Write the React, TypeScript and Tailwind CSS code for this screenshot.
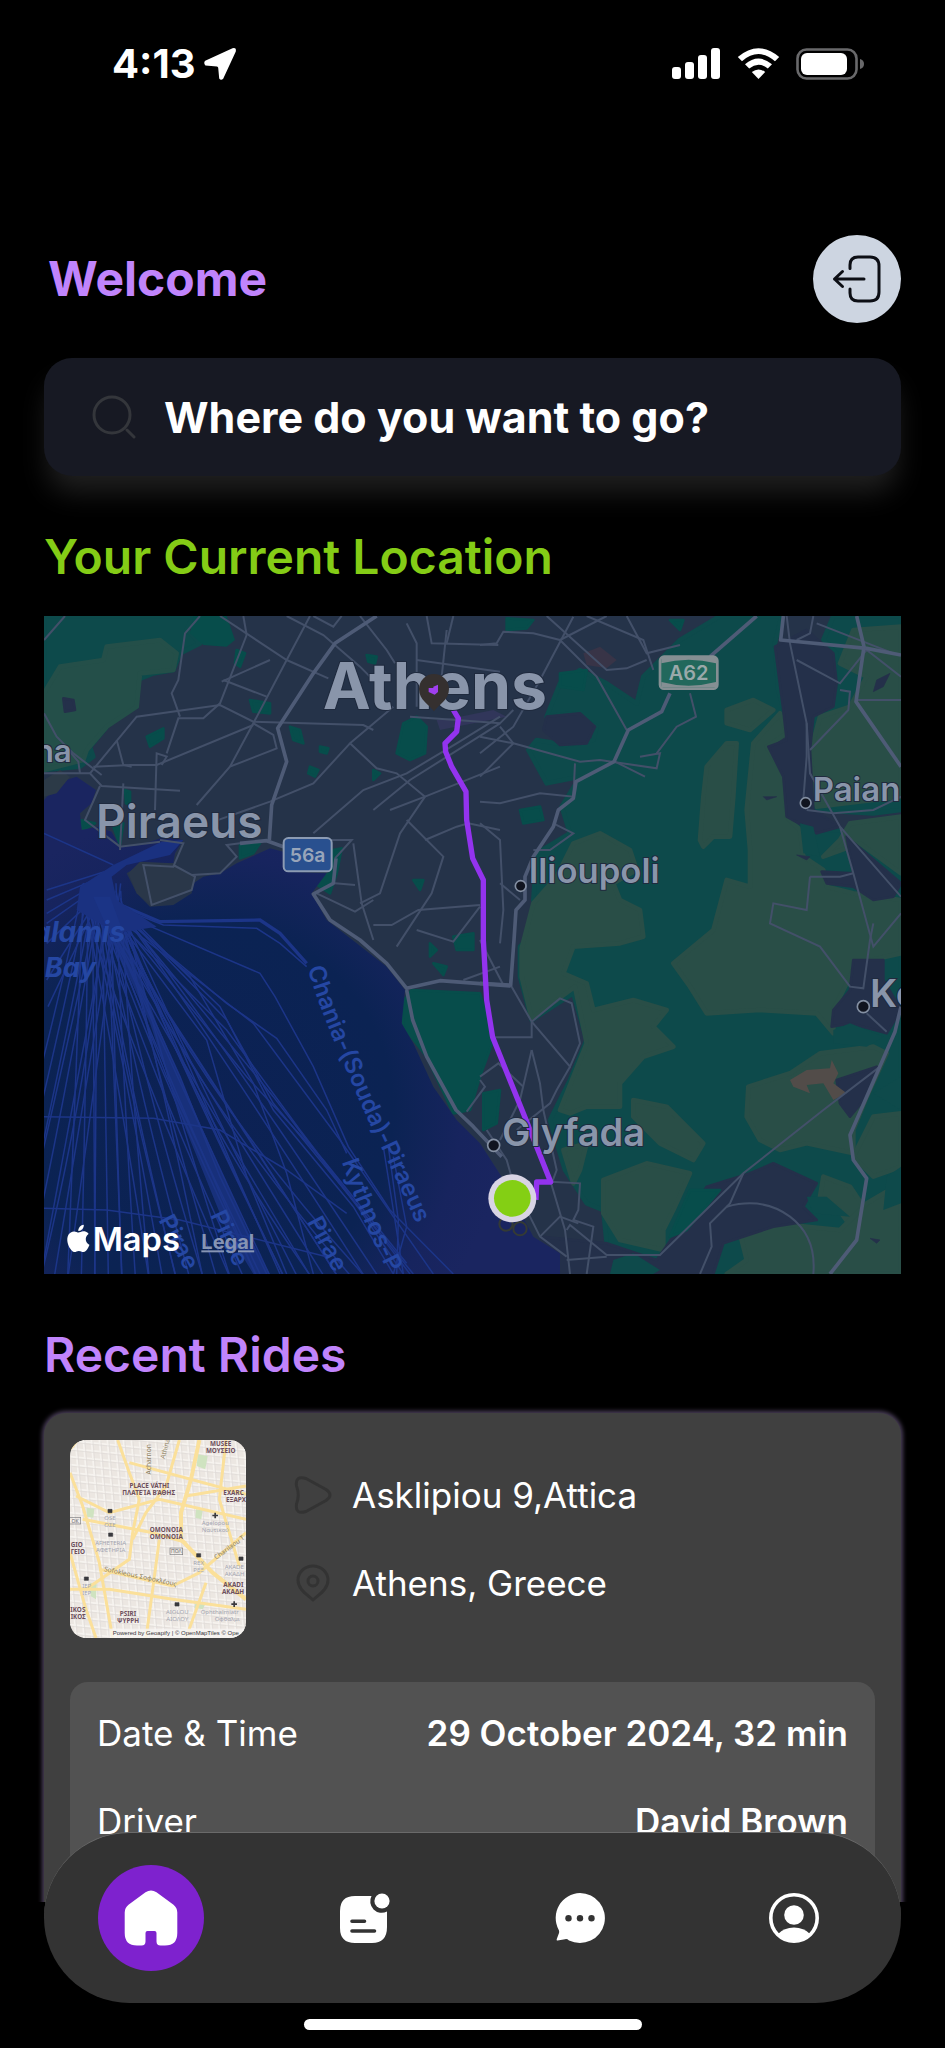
import React from "react";

const ROADS_MAJOR = [
  "M1010 18 L885 100 L820 190 L713 355 L740 455 L695 585 L688 690",
  "M2150 18 L2010 140",
  "M1890 250 L1865 305 L1765 360 L1722 455 L1608 515 L1600 565 L1555 600 L1540 650 L1480 740 L1455 800 L1455 870 L1428 900 L1422 990 L1412 1125 L1320 1120",
  "M600 700 L680 692 L730 710",
  "M888 745 L880 820 L820 852 L870 930 L960 990 L1040 1060 L1100 1135 L1200 1112 L1412 1128",
  "M1100 1140 L1118 1230 L1160 1340 L1248 1500 L1300 1550 L1385 1640",
  "M2230 18 L2222 90 L2480 115 L2583 135",
  "M2450 18 L2472 110 L2448 275 L2583 470",
  "M2583 1190 L2565 1265 L2430 1575 L2440 1650 L2480 1705 L2450 1890 L2370 1992",
];

const ROADS_MINOR = [
  "M12 490 L150 490 L185 528 L420 542",
  "M12 90 L75 18",
  "M12 310 L50 380 L100 430 L185 495",
  "M120 490 L115 455 L85 420",
  "M480 18 L435 70 L415 210 L395 250 L420 320",
  "M150 490 L290 320 L540 285 L640 335 L970 345 L1000 360",
  "M640 340 L700 375 L710 415 L570 470 L470 585",
  "M160 470 L270 465 L350 465 L640 345",
  "M230 390 L250 465 L275 470",
  "M345 600 L350 430 L380 440 L365 465",
  "M620 75 L540 280 L490 325 L415 325 L380 430",
  "M545 215 L690 150 M550 210 L680 260",
  "M540 18 L740 150 L865 205",
  "M610 18 L620 75",
  "M810 18 L740 150 L640 340 L570 470",
  "M740 18 L850 75 L960 170 L1010 220",
  "M820 18 L880 50 L905 18",
  "M960 18 L1040 120 L1065 160",
  "M1100 40 L1130 100 L1130 290",
  "M1160 18 L1175 100 L1375 105",
  "M1220 60 L1205 200",
  "M1240 18 L1220 100",
  "M1130 150 L1380 185",
  "M1110 320 L1250 330 L1380 340 L1420 300",
  "M1060 290 L930 400 L1010 475 L1070 490 L1155 560",
  "M930 400 L820 520 L690 575 L520 635",
  "M820 670 L970 540 L1100 490 L1250 400 L1380 320",
  "M1050 600 L1155 560 L1380 470",
  "M1380 340 L1110 510 L1000 600",
  "M1100 630 L1210 740 L1175 850 L1070 1010",
  "M960 880 L1020 850 L1080 670 L1155 560",
  "M940 700 L965 880 L1000 990",
  "M730 690 L935 690 L885 745",
  "M885 820 L945 825",
  "M830 850 L945 905 L1000 870",
  "M1000 945 L1055 945 L1135 900 L1320 885",
  "M1130 960 L1240 995 L1320 890",
  "M1155 690 L1250 650 L1285 640 L1380 660",
  "M1270 1110 L1380 1070",
  "M240 720 L250 520",
  "M180 528 L135 630 L240 710 L360 695",
  "M360 690 L430 700 L400 770 L310 765 L335 885 L455 840 L465 800 L400 765",
  "M455 795 L540 790 L590 740 L560 705 L600 700",
  "M1600 20 L1500 210 L1420 350 L1320 430",
  "M1560 90 L1670 200 L1760 360",
  "M1320 105 L1370 100 L1390 65 L1480 70 L1560 90",
  "M1560 90 L1700 18",
  "M1520 18 L1700 180 L1760 175 L1820 150",
  "M1640 18 L1810 90 L1840 180",
  "M1760 18 L1820 130 L1920 105",
  "M1320 380 L1420 400 L1620 455 L1680 450 L1850 475 L1860 430 L1800 440",
  "M1380 350 L1420 400 L1320 500",
  "M1725 455 L1815 500",
  "M1605 460 L1600 560 L1500 550 L1380 580 L1320 575",
  "M1950 250 L1968 320 L1910 350 L1850 430",
  "M1540 640 L1600 670 L1530 720 L1480 720",
  "M1320 640 L1380 690 L1390 900 L1380 1000",
  "M1380 820 L1440 870",
  "M2240 18 L2250 100 L2300 340 L2310 490 L2400 650 L2583 860",
  "M2300 340 L2300 440 L2290 570",
  "M2320 18 L2310 70 L2270 90",
  "M2270 150 L2400 220 L2480 120 L2583 200",
  "M2330 40 L2560 130",
  "M2400 240 L2430 245 L2425 300 L2310 420",
  "M2450 270 L2583 270",
  "M2300 600 L2380 610 L2500 600 L2583 560",
  "M2400 650 L2440 790 L2500 1010 L2583 910",
  "M2310 800 L2400 800 L2440 790",
  "M2310 800 L2300 900 L2200 880 L2190 940 L2340 1010 L2430 1130 L2470 1135 L2490 990 L2500 940",
  "M2480 1210 L2540 1265",
  "M2520 1370 L2350 1500 L2110 1690 L1860 1935 L1700 1935 L1590 1845 L1580 1860",
  "M2110 1690 L2070 1780 L2010 1840 L2015 1910 L1980 1992",
  "M2060 1790 Q2170 1760 2250 1820 T2320 1992",
  "M1412 1125 L1475 1235 L1590 1370 L1620 1300 L1595 1180 L1560 1165 L1475 1235",
  "M1358 1282 L1475 1282 L1475 1235",
  "M1475 1320 L1440 1470 L1380 1590",
  "M1475 1320 L1500 1420 L1510 1500 L1550 1680 L1535 1720",
  "M1590 1370 L1550 1440 L1530 1480 L1430 1560",
  "M1320 1400 L1375 1360 L1450 1430",
  "M1320 1410 L1335 1430 L1280 1505",
  "M1532 1715 L1620 1720 L1615 1800 L1600 1830 L1660 1850 L1640 1992",
  "M1532 1715 L1575 1860 L1590 1992",
  "M1500 1880 L1560 1820 L1615 1840",
  "M1340 1560 L1400 1650 L1420 1720 L1500 1880 L1580 1940",
  "M1580 1950 L1700 1940",
  "M1320 990 L1390 1125",
];

const FERRIES = Array.from({ length: 44 }, (_, i) => {
  const endX = -160 + i * 27 + (i % 3) * 14;
  const startX = 130 + (i % 9) * 14;
  const midX = startX + (endX - startX) * (0.24 + (i % 5) * 0.035);
  return `M${startX} ${820 + (i % 4) * 22} Q${midX} ${1180 + (i % 6) * 40} ${endX} 2000`;
});

const FERRIES_EAST = [
  "M200 900 L640 1240 L900 1590 L1180 1992",
  "M210 910 L560 1260 L780 1560 L1110 1992",
  "M215 900 L620 1400 L850 1650 L1100 1960",
  "M230 890 L700 1460 L960 1800 L1090 1992",
  "M220 880 L560 1230 L700 1480 L980 1820 L1120 1992",
  "M240 900 L540 1190 L700 1500 L940 1790 L1060 1992",
  "M240 910 L660 1090 L705 1160 L820 1370 L925 1610 L1050 1800 L1240 1992",
  "M260 930 L560 1180 L710 1285 L860 1500 L920 1630",
  "M250 900 L450 1100 L640 1420 L740 1690 L820 1992",
  "M220 900 L400 1260 L600 1720 L720 1992",
  "M230 930 L500 1290 L620 1700 L740 1992",
  "M200 930 L380 1400 L520 1700 L660 1992",
  "M210 940 L420 1400 L540 1700 L680 1992",
  "M1030 1610 L1060 1800 L1090 1992",
  "M1045 1610 L1075 1830 L1070 1992",
  "M1060 1640 L1100 1850 L1060 1992",
  "M12 1520 L340 1525 L540 1560 L740 1680 L920 1810",
  "M12 1795 L200 1800 L420 1830 L860 1940",
  "M12 670 L220 765",
];

function RouteMap() {
  return (
    <svg
      viewBox="12 18 2571 1974"
      className="block w-full"
      role="img"
      aria-label="Map of Athens with the current route"
      fontFamily="Inter, 'Liberation Sans', sans-serif"
    >
      <defs>
        <radialGradient id="sea" gradientUnits="userSpaceOnUse" cx="500" cy="1500" r="900">
          <stop offset="0" stopColor="#0c2154" />
          <stop offset="0.62" stopColor="#0b2353" />
          <stop offset="0.85" stopColor="#17245e" />
          <stop offset="1" stopColor="#1a2560" />
        </radialGradient>
        <path id="lane-chania" d="M803 1075 C845 1220 900 1330 940 1430 S1080 1720 1165 1925" />
        <path id="lane-kythnos" d="M905 1655 C950 1790 1000 1900 1080 2060" />
      </defs>

      <rect x="12" y="18" width="2571" height="1974" fill="#253349" />

      <g fill="#0d4a4b" stroke="#0d4a4b" strokeWidth="14" strokeLinejoin="round">
        <path d="M12 18 H460 L440 60 L480 100 L420 130 L400 180 L340 190 L290 210 L290 290 L240 310 L200 350 L150 410 L160 440 L120 470 L12 480 Z" />
        <path d="M460 18 H560 L585 90 L560 110 L490 105 L450 70 Z" fill="#074d4b" stroke="none" />
        <path d="M2040 18 H2225 L2205 100 L2215 240 L2240 330 L2190 400 L2230 500 L2240 620 L2300 660 L2400 660 L2583 760 V1992 H1740 L1700 1900 L1690 1800 L1640 1780 L1575 1680 L1530 1530 L1590 1410 L1640 1290 L1600 1150 L1475 1230 L1440 1100 L1440 1010 L1510 940 L1480 870 L1490 730 L1590 670 L1565 590 L1620 500 L1520 520 L1465 420 L1490 390 L1580 405 L1660 390 L1670 350 L1600 310 L1520 320 L1560 220 L1620 180 L1700 220 L1790 280 L1810 200 L1920 90 Z" />
        <path d="M2380 18 H2583 V600 L2500 610 L2320 600 L2310 420 L2330 300 L2380 240 L2390 130 L2350 90 Z" />
      </g>

      <g fill="#294e47" stroke="#294e47" strokeWidth="14" strokeLinejoin="round">
        <path d="M12 250 L60 170 L190 150 L200 110 L360 90 L410 130 L400 180 L300 190 L290 290 L200 350 L140 420 L130 450 L12 480 Z" fill="#244f49" stroke="#244f49" />
        <path d="M1480 880 L1550 800 L1600 700 L1680 670 L1770 720 L1790 780 L1720 820 L1740 870 L1800 900 L1810 980 L1740 1000 L1600 1010 L1570 1090 L1640 1120 L1660 1200 L1780 1170 L1880 1200 L1840 1250 L1900 1310 L1810 1340 L1740 1420 L1740 1490 L1640 1490 L1590 1510 L1560 1500 L1640 1300 L1605 1130 L1475 1225 L1445 1100 L1445 1015 Z" />
        <path d="M1570 1620 L1640 1600 L1620 1680 L1600 1720 Z" />
        <path d="M1980 690 L1990 560 L2000 470 L2060 400 L2090 400 L2080 560 L2070 680 L2020 680 L1990 710 Z" />
        <path d="M2060 300 L2140 270 L2200 300 L2130 360 L2060 340 Z" />
        <path d="M2140 400 L2220 310 L2240 370 L2180 410 L2235 500 L2240 620 L2280 660 L2290 740 L2350 780 L2360 830 L2440 850 L2583 870 V1030 L2450 1060 L2380 1200 L2380 1270 L2330 1210 L2160 1200 L2000 1210 L1950 1130 L1900 1060 L2020 960 L2060 810 L2130 830 L2130 720 L2120 600 Z" />
        <path d="M2440 60 L2583 50 V560 L2330 590 L2310 430 L2340 320 L2430 290 L2480 200 L2400 160 Z" />
        <path d="M2350 740 L2400 690 L2430 640 L2583 620 V790 L2460 700 Z" />
        <path d="M1780 1470 L1880 1490 L1990 1600 L1960 1650 L1860 1600 L1780 1520 Z" />
        <path d="M2125 1430 L2250 1390 L2340 1330 L2500 1310 L2540 1330 L2480 1460 L2440 1560 L2440 1630 L2300 1600 L2220 1620 L2160 1590 L2120 1520 Z" />
        <path d="M2500 1520 L2583 1510 V1670 L2500 1700 L2440 1640 Z" />
        <path d="M1690 1710 L1820 1660 L1950 1690 L1900 1800 L1870 1860 L1870 1920 L1740 1890 L1690 1810 Z" />
        <path d="M2350 1700 L2430 1730 L2470 1790 L2440 1860 L2390 1790 L2340 1760 Z" />
        <path d="M2100 1870 L2200 1840 L2400 1860 L2480 1780 L2583 1720 V1992 H2060 L2120 1950 Z" />
      </g>

      <g fill="#24304a" stroke="#24304a" strokeWidth="8" strokeLinejoin="round">
        <path d="M2205 110 L2300 60 L2380 130 L2390 220 L2380 290 L2320 320 L2310 420 L2320 600 L2400 650 L2330 670 L2240 620 L2230 500 L2185 410 L2240 390 L2230 300 Z" />
        <path d="M1520 320 L1620 310 L1665 350 L1640 400 L1560 405 L1510 360 Z" />
        <path d="M2420 680 L2583 820 L2560 860 L2500 870 L2440 830 L2360 820 L2345 785 L2440 790 Z" />
        <path d="M2440 1050 L2530 1050 L2530 1110 L2583 1200 L2540 1270 L2430 1240 L2375 1250 L2380 1200 L2430 1140 Z" />
        <path d="M2390 1410 L2510 1370 L2480 1460 L2430 1520 L2400 1480 Z" />
        <path d="M2130 1690 L2200 1660 L2330 1720 L2290 1790 L2330 1830 L2200 1850 L2050 1900 L2020 1992 H1560 L1500 1880 L1700 1900 L1850 1950 L1920 1850 L2000 1730 Z" />
        <path d="M70 265 L100 270 L105 300 L75 305 Z" />
        <path d="M2510 210 L2550 190 L2530 230 L2500 245 Z M2170 560 L2210 560 L2180 570 Z M2270 735 L2310 740 L2300 750 Z M2490 1885 L2520 1890 L2510 1900 Z" strokeWidth="2" />
      </g>

      <g fill="#074d4b" stroke="#074d4b" strokeWidth="8" strokeLinejoin="round">
        <path d="M1115 1140 L1320 1150 L1360 1290 L1320 1400 L1290 1500 L1240 1510 L1160 1340 L1090 1250 L1085 1180 Z" />
        <path d="M1330 1450 L1380 1440 L1370 1540 L1330 1560 Z" />
        <path d="M1090 340 L1130 320 L1160 350 L1155 430 L1110 450 L1070 430 Z" />
        <path d="M320 380 L370 355 L370 385 L330 410 Z M590 120 L615 130 L600 170 L585 160 Z M630 270 L690 280 L690 310 L640 305 Z M750 350 L780 360 L790 400 L760 390 Z M810 470 L835 480 L825 500 L805 490 Z M840 410 L865 415 L860 430 L840 425 Z M980 135 L1010 140 L1005 160 L985 155 Z" />
        <path d="M600 705 L660 700 L640 730 L600 745 Z M880 720 L905 715 L890 790 L870 850 L810 810 L870 790 Z M220 650 L250 640 L240 705 Z M120 630 L165 640 L130 660 Z M1000 480 L1020 490 L1000 510 Z M255 540 L270 545 L270 585 L258 580 Z" />
        <path d="M1120 810 L1150 810 L1140 840 Z M1170 1000 L1190 1020 L1170 1040 Z M1240 980 L1300 970 L1300 1020 L1250 1020 Z M1180 1060 L1220 1070 L1210 1095 Z" />
        <path d="M1400 25 L1480 30 L1460 55 L1400 60 Z M1560 190 L1640 180 L1630 240 L1560 230 Z M1890 30 L1930 30 L1920 60 Z M1440 600 L1500 590 L1510 630 L1450 640 Z M1890 1880 L1950 1740 L2040 1740 L1940 1860 Z" />
      </g>
      <g fill="#0e4a4b">
        <path d="M2380 1260 L2430 1240 L2530 1280 L2480 1310 L2380 1300 Z M2280 640 L2320 650 L2340 740 L2290 730 Z M2300 1760 L2360 1760 L2430 1820 L2320 1810 Z M1720 1950 L1780 1930 L1860 1980 L1840 1992 L1710 1992 Z" />
        <path d="M2500 1450 L2583 1400 V1500 Z M2540 1700 L2583 1670 V1780 L2530 1800 Z" />
      </g>
      <path d="M1630 130 L1680 110 L1730 150 L1700 175 L1640 165 Z" fill="#383447" />
      <path d="M1190 330 L1260 320 L1360 300 L1400 320 L1300 340 L1200 360 Z" fill="#31365a" />
      <path d="M2250 1410 L2300 1380 L2370 1375 L2375 1350 L2395 1390 L2380 1420 L2420 1450 L2380 1470 L2350 1420 L2300 1425 L2310 1450 L2260 1430 Z" fill="#524c49" />

      <path
        d="M12 570 L60 515 L110 500 L168 540 L155 580 L120 610 L125 660 L170 650 L215 665 L240 710 L300 705 L375 680 L430 690 L405 730 L400 760 L310 760 L260 790 L290 850 L330 890 L400 885 L455 850 L460 820 L490 800 L540 790 L590 760 L690 715 L730 725 L740 785 L860 790 L815 850 L860 930 L950 1000 L1040 1070 L1095 1140 L1085 1240 L1120 1300 L1180 1430 L1250 1530 L1320 1600 L1385 1700 L1480 1880 L1560 1930 L1560 1992 L12 1992 Z"
        fill="url(#sea)"
      />
      <path d="M12 510 L60 480 L90 500 L50 550 L12 560 Z" fill="#2c3a47" />
      <path d="M300 755 L400 760 L465 800 L455 842 L335 888 L290 850 L265 790 Z" fill="#2a3749" />

      <g fill="none" stroke="#1c3588" strokeWidth="4.500">
        {FERRIES.map((d) => (
          <path key={d} d={d} />
        ))}
        {FERRIES_EAST.map((d) => (
          <path key={d} d={d} />
        ))}
        <path d="M210 780 L20 840 M210 790 L20 870 M205 800 L20 910 M205 810 L20 940 M200 830 L20 1000 M190 840 L20 1110 M190 840 L24 1190" />
        <path d="M230 880 L360 935 L660 930 L720 970 L800 1060" strokeWidth="10" />
        <path d="M230 890 L370 945 L650 955 L720 1000 L800 1070" />
      </g>
      <path d="M430 690 L365 695 L220 765 L120 830 L110 900 L230 970 L350 950 L230 870 L215 800 L260 765 L390 735 Z" fill="#1a3180" />
      <path d="M160 860 L210 860 L350 1240 L480 1540 L640 1900 L690 1992 L640 1992 L560 1860 L430 1540 L330 1240 Z" fill="#1c3688" fillOpacity="0.75" />

      <g fill="none" stroke="#435069" strokeWidth="6">
        {ROADS_MINOR.map((d) => (
          <path key={d} d={d} />
        ))}
      </g>
      <g fill="none" stroke="#4e5b76" strokeWidth="11" strokeLinejoin="round">
        {ROADS_MAJOR.map((d) => (
          <path key={d} d={d} />
        ))}
      </g>

      <g fill="#2547a3" fontWeight="600" fontSize="71">
        <text x="-20" y="995" fontStyle="italic" fontWeight="700" fontSize="84">alamis</text>
        <text x="14" y="1100" fontStyle="italic" fontWeight="700" fontSize="82">Bay</text>
        <text><textPath href="#lane-chania">Chania-(Souda)-Piraeus</textPath></text>
        <text><textPath href="#lane-kythnos">Kythnos-P</textPath></text>
        <text transform="translate(355 1830) rotate(62)">Pirae</text>
        <text transform="translate(510 1815) rotate(65)">Pirae</text>
        <text transform="translate(800 1835) rotate(62)">Pirae</text>
      </g>

      <path
        d="M1240 300 L1255 325 L1250 365 L1215 400 L1217 425 L1235 470 L1278 545 L1280 630 L1298 745 L1330 810 L1330 990 L1340 1170 L1358 1282 L1450 1510 L1532 1716 L1490 1716 L1488 1770"
        fill="none"
        stroke="#9333ee"
        strokeWidth="16"
        strokeLinejoin="round"
      />

      <g fill="#8995aa" stroke="#1f2a3e" strokeWidth="6" paintOrder="stroke" fontWeight="600">
        <text x="848" y="298" fontSize="193" fontWeight="700">Athens</text>
        <text x="168" y="685" fontSize="138">Piraeus</text>
        <text x="-16" y="457" fontSize="94">na</text>
        <text x="1466" y="820" fontSize="104">Ilioupoli</text>
        <text x="2318" y="574" fontSize="99">Paian</text>
        <text x="2490" y="1192" fontSize="116">Ko</text>
        <text x="1386" y="1608" fontSize="114">Glyfada</text>
      </g>

      <g fill="#10141f" stroke="#8490a3" strokeWidth="5">
        <circle cx="1442" cy="828" r="16" />
        <circle cx="2297" cy="579" r="16" />
        <circle cx="2470" cy="1190" r="18" />
        <circle cx="1361" cy="1606" r="18" />
      </g>

      <g fontWeight="600" textAnchor="middle">
        <rect x="731" y="684" width="144" height="100" rx="14" fill="#29508f" stroke="#8c9bb3" strokeWidth="6" />
        <text x="803" y="755" fontSize="58" fill="#98a5ba">56a</text>
        <rect x="1860" y="140" width="172" height="96" rx="12" fill="#22685c" stroke="#858f93" strokeWidth="8" />
        <path d="M1864 144 H2028 V160 Q1946 138 1864 160 Z M1864 232 H2028 V216 Q1946 238 1864 216 Z" fill="#858f93" />
        <text x="1946" y="209" fontSize="60" fill="#9aa9aa">A62</text>
      </g>

      <path d="M1182 304 C1168 284 1137 270 1137 237 A45 45 0 0 1 1227 237 C1227 270 1196 284 1182 304 Z" fill="#35302f" />
      <path d="M1166 234 h14 v-4 l14 -6 v22 l-10 8 l-18 -8 z" fill="#9f3fee" />

      <g fill="none" stroke="#343a35" strokeWidth="6">
        <circle cx="1398" cy="1842" r="20" />
        <circle cx="1440" cy="1856" r="20" />
      </g>
      <circle cx="1417" cy="1765" r="72" fill="#d8d4e4" />
      <circle cx="1417" cy="1765" r="55" fill="#84cf14" />

      <g transform="translate(80 1842)">
        <path
          d="M18.71 19.5c-.83 1.24-1.71 2.45-3.05 2.47-1.34.03-1.77-.79-3.29-.79-1.53 0-2 .77-3.27.82-1.31.05-2.3-1.32-3.14-2.53C4.25 17 2.94 12.45 4.7 9.39c.87-1.52 2.43-2.48 4.12-2.51 1.28-.02 2.5.87 3.29.87.78 0 2.26-1.07 3.81-.91.65.03 2.47.26 3.64 1.98-.09.06-2.17 1.28-2.15 3.81.03 3.02 2.65 4.03 2.68 4.04-.03.07-.42 1.44-1.38 2.83M13 3.5c.73-.83 1.94-1.46 2.94-1.5.13 1.17-.34 2.35-1.04 3.19-.69.85-1.83 1.51-2.95 1.42-.15-1.15.41-2.35 1.05-3.11z"
          transform="translate(-14 -6) scale(4.1)"
          fill="#fff"
        />
      </g>
      <text x="158" y="1924" fontSize="98" fontWeight="600" fill="#fff">Maps</text>
      <a href="#legal">
        <text x="484" y="1918" fontSize="60" fontWeight="700" fill="#8694b4" textDecoration="underline">Legal</text>
      </a>
    </svg>
  );
}

const STREET_GRID = Array.from({ length: 26 }, (_, i) => {
  const o = i * 24;
  return `M${180 + o} 422 L${230 + o} 1016 M212 ${400 + o} L740 ${452 + o}`;
});

function RideThumbnail() {
  return (
    <svg
      viewBox="212 422 528 594"
      className="block w-44 shrink-0 rounded-2xl"
      role="img"
      aria-label="Map of central Athens"
      fontFamily="'Noto Sans', 'DejaVu Sans', sans-serif"
      textAnchor="middle"
    >
      <rect x="212" y="422" width="528" height="594" fill="#ece7e2" />
      <g stroke="#f6f3ef" strokeWidth="5" fill="none">
        {STREET_GRID.map((d) => (
          <path key={d} d={d} />
        ))}
      </g>
      <g stroke="#e0dbd8" strokeWidth="2" fill="none">
        {STREET_GRID.map((d) => (
          <path key={d} d={d} transform="translate(5 5)" />
        ))}
      </g>
      <g fill="#cfe3c0">
        <path d="M595 465 L625 470 L618 510 L592 500 Z M262 625 L285 628 L282 655 L262 652 Z M590 630 L610 632 L606 660 L588 655 Z M272 850 L292 855 L290 900 L274 890 Z M590 905 L620 910 L610 930 L585 925 Z" />
      </g>
      <g stroke="#fbe09a" strokeWidth="9" fill="none">
        <path d="M355 422 L390 520 L420 600 L400 700 L390 780 L260 870" />
        <path d="M600 422 L575 540 L545 640 L545 720 L640 820 L740 900" strokeWidth="12" />
        <path d="M212 520 L250 620 L300 790 L340 1016" />
        <path d="M230 590 L330 640 L480 600 L740 660" />
        <path d="M390 490 L740 585" />
        <path d="M212 870 L330 870 L520 900 L740 930" />
        <path d="M480 720 L460 870 L440 1016" />
        <path d="M300 810 L520 860 L600 820 L740 700" />
        <path d="M540 422 L500 560 L440 640 L400 720" />
        <path d="M680 422 L660 600 L720 800" />
        <path d="M212 760 L260 930 L290 1016" />
        <path d="M250 660 L460 700 L560 730" />
        <path d="M212 450 L235 422 M560 590 L740 560 M620 850 L560 1016" />
      </g>
      <g fill="#6d4f5c" fontSize="19" fontWeight="700">
        <text x="664" y="439">MUSEE</text>
        <text x="664" y="461">ΜΟΥΣΕΙΟ</text>
        <text x="450" y="567">PLACE VÁTHI</text>
        <text x="448" y="588">ΠΛΑΤΕΊΑ ΒΆΘΗΣ</text>
        <text x="672" y="587" textAnchor="start">EXARC</text>
        <text x="680" y="609" textAnchor="start">ΕΞΑΡΧ</text>
        <text x="501" y="698">OMONOIA</text>
        <text x="501" y="720">ΟΜΟΝΟΙΑ</text>
        <text x="214" y="743" textAnchor="start">GIO</text>
        <text x="214" y="765" textAnchor="start">ΓΕΙΟ</text>
        <text x="672" y="863" textAnchor="start">AKADI</text>
        <text x="668" y="884" textAnchor="start">ΑΚΑΔΗ</text>
        <text x="213" y="937" textAnchor="start">IKOS</text>
        <text x="214" y="959" textAnchor="start">ΙΚΟΣ</text>
        <text x="386" y="950">PSIRI</text>
        <text x="386" y="972">ΨΥΡΡΗ</text>
      </g>
      <g fill="#a3a5b1" fontSize="18">
        <text x="332" y="663">OSE</text>
        <text x="332" y="683">ΟΣΕ</text>
        <text x="334" y="737">AFHETERIA</text>
        <text x="334" y="757">ΑΦΕΤΗΡΙΑ</text>
        <text x="598" y="797">REX</text>
        <text x="598" y="817">ΡΕΞ</text>
        <text x="648" y="677">Agelopou</text>
        <text x="648" y="697">Ναυτικού</text>
        <text x="676" y="808" textAnchor="start">AKADE</text>
        <text x="676" y="829" textAnchor="start">ΑΚΑΔΗ</text>
        <text x="534" y="944">AIOLOU</text>
        <text x="534" y="965">ΑΙΟΛΟΥ</text>
        <text x="604" y="943" textAnchor="start">Ophthalmiatr</text>
        <text x="646" y="964" textAnchor="start">Οφθαλμι</text>
        <text x="262" y="867">ΙΕΡ</text>
        <text x="262" y="887">ΙΕΡ</text>
      </g>
      <g fill="#8d8160" fontSize="20">
        <text transform="translate(455 480) rotate(-90)">Acharnon</text>
        <text transform="translate(504 450) rotate(-75)">Athina</text>
        <text transform="translate(422 838) rotate(12)">Sofokleous Σοφοκλέους</text>
        <text transform="translate(694 750) rotate(-36)">Charilaou T</text>
      </g>
      <g fill="none" stroke="#7d7d80" strokeWidth="2">
        <rect x="512" y="746" width="38" height="20" />
        <rect x="206" y="654" width="38" height="20" />
      </g>
      <g fill="#65656a" fontSize="15">
        <text x="531" y="762">ΠΟΛ</text>
        <text x="227" y="670">ΟΚ</text>
      </g>
      <g fill="#3a3a3e">
        <path d="M326 630h12v10h-12z M328 701h12v10h-12z M592 763h12v10h-12z M719 773h12v10h-12z M255 833h12v10h-12z M527 910h12v10h-12z" stroke="#3a3a3e" strokeWidth="2" />
        <path d="M645 640h5v6h6v5h-6v6h-5v-6h-6v-5h6z M702 906h5v6h6v5h-6v6h-5v-6h-6v-5h6z" />
      </g>
      <rect x="330" y="988" width="410" height="28" fill="#f7f5f2" fillOpacity="0.8" />
      <text x="340" y="1006" fontSize="18" fill="#35353a" textAnchor="start" fontFamily="'Liberation Sans', sans-serif">
        Powered by Geoapify | © OpenMapTiles © Ope
      </text>
    </svg>
  );
}

function StatusBar() {
  return (
    <div className="flex h-32 shrink-0 items-center justify-between pr-20 pl-28">
      <div className="flex items-center gap-2">
        <span className="text-[40px] leading-none font-bold">4:13</span>
        <svg width="34" height="34" viewBox="0 0 34 34" aria-hidden="true">
          <path d="M29.5 1.2 L2.2 13.8 Q.2 16 2.4 18.4 L14 19.5 Q15 19.7 15.2 20.8 L16.2 31.4 Q17.8 34 20.2 31.8 L32.8 4.4 Q33.6 .2 29.5 1.2 Z" fill="#fff" />
        </svg>
      </div>
      <div className="flex items-center gap-4">
        <svg width="49" height="32" viewBox="0 0 49 32" fill="#fff" aria-label="Signal">
          <rect x="0" y="19" width="9" height="12" rx="3" />
          <rect x="13" y="14" width="9" height="17" rx="3" />
          <rect x="26" y="7" width="9" height="24" rx="3" />
          <rect x="39" y="0" width="9" height="31" rx="3" />
        </svg>
        <svg width="43" height="32" viewBox="0 0 43 32" fill="#fff" aria-label="Wi-Fi">
          <path d="M21.500 31 L14.800 24 Q21.500 18.800 28.200 24 Z" />
          <path d="M8 16.200 Q21.500 4.800 35 16.200 L30.800 20.400 Q21.500 13 12.200 20.400 Z" />
          <path d="M.8 9 Q21.500 -8.500 42.200 9 L38 13.200 Q21.500 -1 5 13.200 Z" />
        </svg>
        <svg width="69" height="32" viewBox="0 0 69 32" aria-label="Battery">
          <rect x="1.500" y="1.500" width="59" height="29" rx="9" fill="none" stroke="#69696b" strokeWidth="2.600" />
          <rect x="5" y="5" width="46" height="22" rx="6" fill="#fff" />
          <path d="M64 11 Q68 12 68 16 T64 21 Z" fill="#69696b" />
        </svg>
      </div>
    </div>
  );
}

function LogoutIcon() {
  return (
    <svg width="50" height="50" viewBox="0 0 50 50" fill="none" stroke="#0c0e14" strokeWidth="3" strokeLinecap="round" strokeLinejoin="round" aria-hidden="true">
      <path d="M18 14.500 V11 Q18 3 26 3 H38 Q47 3 47 12 V38 Q47 47 38 47 H26 Q18 47 18 39 V35" />
      <path d="M32 25 H2.500 M10.500 17.500 L2.500 25 L10.500 32.500" />
    </svg>
  );
}

function HomeIcon() {
  return (
    <svg width="54" height="56" viewBox="0 0 54 56" fill="#fff" aria-hidden="true">
      <path d="M21.500 2.200 Q27 -1.200 32.500 2.200 L49.500 14.800 Q53.300 18 53.300 22.500 V43 Q53.300 55.500 41 55.500 H36.500 Q32.500 55.500 32.500 51.500 V43 Q32.500 41 30.500 41 H23.500 Q21.500 41 21.500 43 V51.500 Q21.500 55.500 17.500 55.500 H13 Q.7 55.500 .7 43 V22.500 Q.7 18 4.500 14.800 Z" />
    </svg>
  );
}

function NotesIcon() {
  return (
    <svg width="50" height="50" viewBox="0 0 50 50" aria-hidden="true">
      <path d="M31.500 3 A11.500 11.500 0 0 0 47 18.500 V34 Q47 50 32 50 H15 Q0 50 0 35 V18 Q0 3 15 3 Z" fill="#fff" />
      <circle cx="42" cy="8" r="7.600" fill="#fff" />
      <path d="M12 28.300 H24.500 M12 38 H34.500" stroke="#333" strokeWidth="3.600" strokeLinecap="round" />
    </svg>
  );
}

function ChatIcon() {
  return (
    <svg width="50" height="50" viewBox="0 0 50 50" aria-hidden="true">
      <path d="M25 0 A25 25 0 1 1 14 47.500 Q12 45.500 10 46.200 L2.500 47.500 Q1.500 47.500 1.700 46.300 L4 40 Q4.500 38 3.500 36.500 A25 25 0 0 1 25 0 Z" fill="#fff" />
      <g fill="#333">
        <circle cx="13.500" cy="25.200" r="3.200" />
        <circle cx="25" cy="25.200" r="3.200" />
        <circle cx="36.500" cy="25.200" r="3.200" />
      </g>
    </svg>
  );
}

function ProfileIcon() {
  return (
    <svg width="50" height="50" viewBox="0 0 50 50" aria-hidden="true">
      <circle cx="25" cy="25" r="23.200" fill="none" stroke="#fff" strokeWidth="3.600" />
      <circle cx="25" cy="22" r="9.800" fill="#fff" />
      <path d="M9 41 Q15 34.500 25 34.500 T41 41 A23.500 23.500 0 0 1 9 41 Z" fill="#fff" />
    </svg>
  );
}

function SectionTitle({ children, tone }: { children: React.ReactNode; tone: string }) {
  return <h2 className={`text-[48px] leading-[60px] font-semibold ${tone}`}>{children}</h2>;
}

function DetailRow({ label, value }: { label: string; value: string }) {
  return (
    <div className="flex items-center justify-between text-[35px] leading-[44px]">
      <dt>{label}</dt>
      <dd className="font-semibold">{value}</dd>
    </div>
  );
}

const TABS = [
  { label: "Home", icon: <HomeIcon />, active: true },
  { label: "Rides", icon: <NotesIcon />, active: false },
  { label: "Chat", icon: <ChatIcon />, active: false },
  { label: "Profile", icon: <ProfileIcon />, active: false },
];

export default function App() {
  return (
    <div className="flex h-screen flex-col bg-black font-[Inter,'Liberation_Sans',sans-serif] text-white">
      <StatusBar />

      <main className="min-h-0 flex-1 overflow-y-auto px-11 pt-[107px] [scrollbar-width:none]">
        <header className="flex items-center justify-between pl-1">
          <h1 className="text-[48px] leading-[60px] font-bold text-[#c084fc]">Welcome</h1>
          <button aria-label="Log out" className="flex size-22 items-center justify-center rounded-full bg-[#cdd5e1]">
            <LogoutIcon />
          </button>
        </header>

        <label className="mt-[35px] flex h-[118px] items-center gap-7 rounded-[28px] bg-[#171923] px-12 shadow-[0_20px_28px_-4px_rgba(64,64,64,0.5)]">
          <svg width="44" height="44" viewBox="0 0 44 44" fill="none" stroke="#34363b" strokeWidth="3" strokeLinecap="round" aria-hidden="true">
            <circle cx="20" cy="20" r="18" />
            <path d="M35 35 L42 42" />
          </svg>
          <input
            type="text"
            aria-label="Where do you want to go?"
            placeholder="Where do you want to go?"
            className="min-w-0 flex-1 bg-transparent text-[43px] font-bold outline-none placeholder:text-white placeholder:opacity-100"
          />
        </label>

        <section className="mt-[51px]">
          <SectionTitle tone="text-[#84cc16]">Your Current Location</SectionTitle>
          <div className="mt-[29px]">
            <RouteMap />
          </div>
        </section>

        <section className="mt-[51px]">
          <SectionTitle tone="text-[#c084fc]">Recent Rides</SectionTitle>
          <article className="mt-7 rounded-[22px] bg-[#404040] px-[26px] pt-[27px] pb-8 shadow-[0_0_4px_2px_rgba(107,90,128,0.7)]">
            <div className="flex items-center gap-12">
              <RideThumbnail />
              <div className="flex flex-col gap-11 text-[35px] leading-[44px]">
                <div className="flex items-center gap-5">
                  <svg width="38" height="38" viewBox="0 0 38 38" fill="none" stroke="#333" strokeWidth="3" strokeLinejoin="round" aria-hidden="true">
                    <path d="M12 2.500 L32 13.500 Q40 19 32 24.500 L12 35.500 Q1 39 2.500 28 Q6 19 2.500 10 Q1 -1 12 2.500 Z" />
                  </svg>
                  <span>Asklipiou 9,Attica</span>
                </div>
                <div className="flex items-center gap-5">
                  <svg width="38" height="38" viewBox="0 0 38 38" fill="none" stroke="#333" strokeWidth="3" strokeLinejoin="round" aria-hidden="true">
                    <path d="M19 36 C14 31 4 26 4 16 A15 14 0 0 1 34 16 C34 26 24 31 19 36 Z" />
                    <circle cx="19" cy="17" r="5" />
                  </svg>
                  <span>Athens, Greece</span>
                </div>
              </div>
            </div>
            <dl className="mt-11 flex flex-col gap-11 rounded-[18px] bg-[#525252] px-[27px] pt-[29px] pb-24">
              <DetailRow label="Date & Time" value="29 October 2024, 32 min" />
              <DetailRow label="Driver" value="David Brown" />
            </dl>
          </article>
        </section>
      </main>

      <footer className="relative -mt-[70px] shrink-0 px-11 pb-[18px]">
        <nav className="grid h-[171px] grid-cols-4 rounded-full border-t border-[#6a6a6a] bg-[#333333]">
          {TABS.map((tab) => (
            <button
              key={tab.label}
              aria-label={tab.label}
              className={`flex size-[106px] items-center justify-center self-center justify-self-center rounded-full ${tab.active ? "bg-[#7e22ce]" : ""}`}
            >
              {tab.icon}
            </button>
          ))}
        </nav>
        <div className="mx-auto mt-4 h-[11px] w-[338px] rounded-full bg-white" />
      </footer>
    </div>
  );
}
